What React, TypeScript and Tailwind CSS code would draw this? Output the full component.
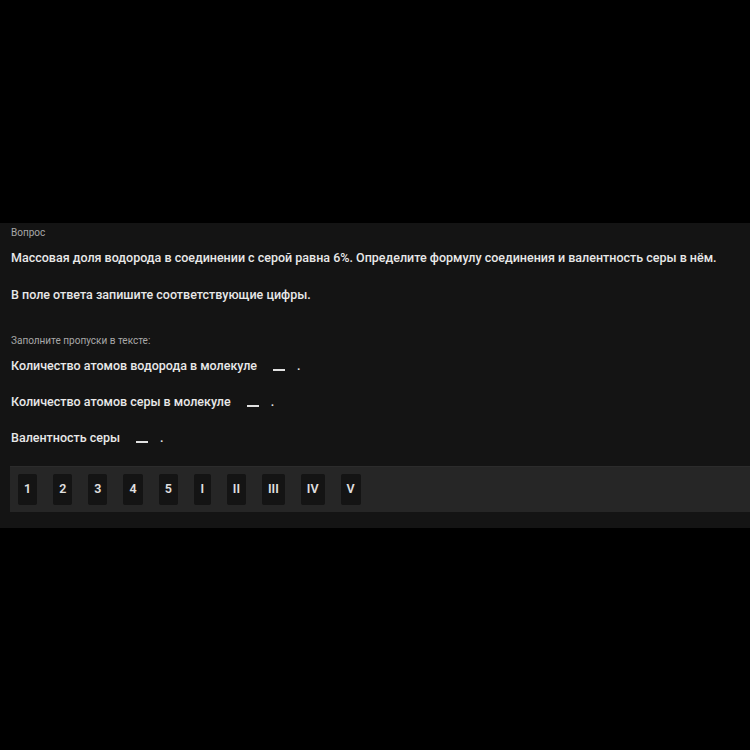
import React from 'react';

const options = ['1', '2', '3', '4', '5', 'I', 'II', 'III', 'IV', 'V'];

const gaps = [
  'Количество атомов водорода в молекуле',
  'Количество атомов серы в молекуле',
  'Валентность серы',
];

function Blank() {
  return (
    <span className="inline-flex items-center ml-4">
      <span className="inline-block w-[12px] h-[2px] bg-[#e0e0e0] mt-[8px]" />
      <span className="ml-[12px]">.</span>
    </span>
  );
}

export default function App() {
  return (
    <div className="w-[750px] h-[750px] bg-black flex flex-col justify-center font-['Roboto',sans-serif]">
      <div className="bg-[#141414] pl-[11px] pb-[15px] h-[305px]">
        <div className="text-[10px] text-[#a8a8a8] leading-[20px]">Вопрос</div>
        {/* question */}
        <p className="text-[12.5px] font-medium text-[#e8e8e8] leading-[20px] mt-[5px]">
          Массовая доля водорода в соединении с серой равна 6%. Определите формулу соединения и валентность серы в нём.
        </p>
        <p className="text-[12.5px] font-medium text-[#e8e8e8] leading-[20px] mt-[17px]">
          В поле ответа запишите соответствующие цифры.
        </p>

        <div className="text-[10px] text-[#a8a8a8] leading-[20px] mt-[26px]">Заполните пропуски в тексте:</div>
        <div className="flex flex-col gap-[16px] mt-[5px]">
          {gaps.map((g) => (
            <div key={g} className="text-[12.5px] font-medium text-[#e8e8e8] leading-[20px] flex items-center">
              <span>{g}</span>
              <Blank />
            </div>
          ))}
        </div>

        {/* answer options tray */}
        <div className="mt-[18px] -ml-[1px] bg-[#262626] border-t border-[#2c2c2c] h-[46px] pl-[8px] flex items-center gap-[16px]">
          {options.map((o) => (
            <div
              key={o}
              className="h-[31px] min-w-[17px] px-[6px] bg-[#141414] rounded-[2px] flex items-center justify-center text-[12.5px] font-semibold text-[#e0e0e0]"
            >
              {o}
            </div>
          ))}
        </div>
      </div>
    </div>
  );
}
